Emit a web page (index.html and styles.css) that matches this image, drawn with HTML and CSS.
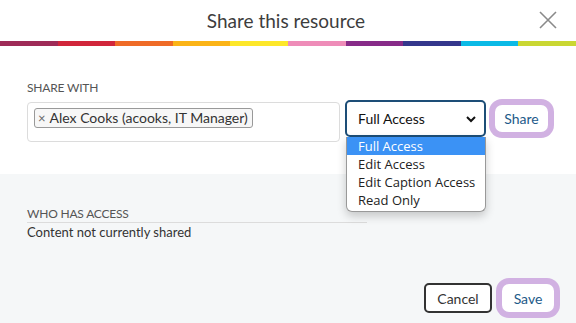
FILE: index.html
```html
<!DOCTYPE html>
<html>
<head>
    <title>Share this resource</title>
    <link rel="stylesheet" href="styles.css">
</head>
<body>
    <div class="modal">
        <div class="modal-head">
            <h1>Share this resource</h1>
            <button class="close" aria-label="Close">
                <svg width="18" height="18" viewBox="0 0 18 18">
                    <path d="M1 1 L17 17 M17 1 L1 17" stroke="#8a8a8a" stroke-width="1.6" fill="none"/>
                </svg>
            </button>
        </div>

        <!-- colour strip under the title -->
        <div class="rainbow">
            <span class="c1"></span><span class="c2"></span><span class="c3"></span><span class="c4"></span><span class="c5"></span>
            <span class="c6"></span><span class="c7"></span><span class="c8"></span><span class="c9"></span><span class="c10"></span>
        </div>

        <div class="share-with">
            <div class="caps">Share with</div>
            <div class="share-row">
                <div class="people-input">
                    <span class="tag"><span class="tag-x">&times;</span>Alex Cooks (acooks, IT Manager)</span>
                </div>
                <div class="access-select">
                    <span>Full Access</span>
                    <svg width="12" height="8" viewBox="0 0 12 8">
                        <path d="M2 2 L6 6 L10 2" stroke="#111" stroke-width="2" fill="none"/>
                    </svg>
                    <ul class="access-menu">
                        <li class="selected">Full Access</li>
                        <li>Edit Access</li>
                        <li>Edit Caption Access</li>
                        <li>Read Only</li>
                    </ul>
                </div>
                <button class="btn focus">Share</button>
            </div>
        </div>

        <div class="who">
            <div class="caps who-title">Who has access</div>
            <p class="none-yet">Content not currently shared</p>
            <div class="actions">
                <button class="btn cancel">Cancel</button>
                <button class="btn focus">Save</button>
            </div>
        </div>
    </div>
</body>
</html>
```

FILE: styles.css
```css
body {
    margin: 0;
    padding: 0;
    font-family: Lato, "Noto Sans", sans-serif;
    color: #333;
    background-color: #ffffff;
}

.modal {
    width: 576px;
    height: 323px;
    display: flex;
    flex-direction: column;
    overflow: hidden;
}

.modal-head {
    height: 41px;
    display: flex;
    align-items: center;
    justify-content: center;
    position: relative;
}

.modal-head h1 {
    margin: 0;
    font-size: 19px;
    font-weight: 400;
    color: #3d3d3d;
    margin-left: -4px;
}

.close {
    position: absolute;
    right: 19px;
    top: 11px;
    border: none;
    background: none;
    padding: 0;
    width: 18px;
    height: 18px;
}

.rainbow {
    height: 5px;
    display: flex;
}

.rainbow span {
    flex: 1;
}

.c1 { background-color: #9e2b57; }
.c2 { background-color: #d1263b; }
.c3 { background-color: #ef6b27; }
.c4 { background-color: #fbb417; }
.c5 { background-color: #fde72a; }
.c6 { background-color: #ee8cb8; }
.c7 { background-color: #872b88; }
.c8 { background-color: #34378c; }
.c9 { background-color: #0bbae6; }
.c10 { background-color: #cad732; }

.share-with {
    height: 128px;
    padding: 34px 22px 0 27px;
    box-sizing: border-box;
}

.caps {
    font-size: 12px;
    text-transform: uppercase;
    color: #555;
    letter-spacing: -0.2px;
}

.share-row {
    display: flex;
    align-items: flex-start;
    margin-top: 5px;
}

.people-input {
    width: 313px;
    height: 40px;
    box-sizing: border-box;
    border: 1px solid #dcdcdc;
    border-radius: 4px;
    padding: 4px 6px;
    margin-top: 2px;
}

.tag {
    display: inline-block;
    border: 1px solid #999;
    border-radius: 3px;
    background-color: #f7f7f7;
    font-size: 14px;
    line-height: 17px;
    padding: 0 4px 0 3px;
    color: #333;
}

.tag-x {
    font-size: 13px;
    color: #666;
    margin-right: 4px;
}

.access-select {
    position: relative;
    width: 141px;
    height: 37px;
    box-sizing: border-box;
    margin-left: 5px;
    border: 2px solid #1d4e77;
    border-radius: 5px;
    display: flex;
    align-items: center;
    justify-content: space-between;
    padding: 0 7px 0 11px;
    font-size: 14px;
    color: #111;
}

.access-menu {
    position: absolute;
    left: -1px;
    top: 35px;
    width: 138px;
    margin: 0;
    padding: 0 0 2px 0;
    list-style: none;
    background-color: #ffffff;
    border: 1px solid #999;
    border-top: none;
    border-radius: 0 0 6px 6px;
    box-shadow: 0 4px 10px rgba(0, 0, 0, 0.2);
    font-family: "Open Sans", sans-serif;
    font-size: 13px;
    z-index: 2;
}

.access-menu li {
    height: 18px;
    line-height: 18px;
    padding-left: 11px;
    color: #222;
}

.access-menu li.selected {
    background-color: #3b92f5;
    color: #ffffff;
}

.btn {
    font-family: inherit;
    font-size: 14px;
    border: none;
    background-color: #ffffff;
    border-radius: 7px;
    padding: 0;
    height: 27px;
    width: 53px;
    color: #1d5a89;
}

/* purple focus ring */
.focus {
    box-shadow: 0 0 0 6px #d1b1e2;
}

.share-row .btn {
    margin-left: 9px;
    margin-top: 5px;
}

.who {
    flex: 1;
    background-color: #f5f7f8;
    padding: 32px 22px 0 27px;
    display: flex;
    flex-direction: column;
}

.who-title {
    width: 340px;
    padding-bottom: 1px;
    border-bottom: 1px solid #dcdcdc;
}

.none-yet {
    margin: 1px 0 0 0;
    font-size: 13px;
    color: #333;
}

.actions {
    margin-top: auto;
    margin-bottom: 10px;
    display: flex;
    justify-content: flex-end;
    gap: 10px;
}

.cancel {
    width: 68px;
    height: 30px;
    border: 2px solid #333;
    border-radius: 5px;
    color: #333;
    background-color: #ffffff;
}

.actions .focus {
    height: 28px;
    width: 52px;
    margin-top: 1px;
    margin-right: 0;
}
```
